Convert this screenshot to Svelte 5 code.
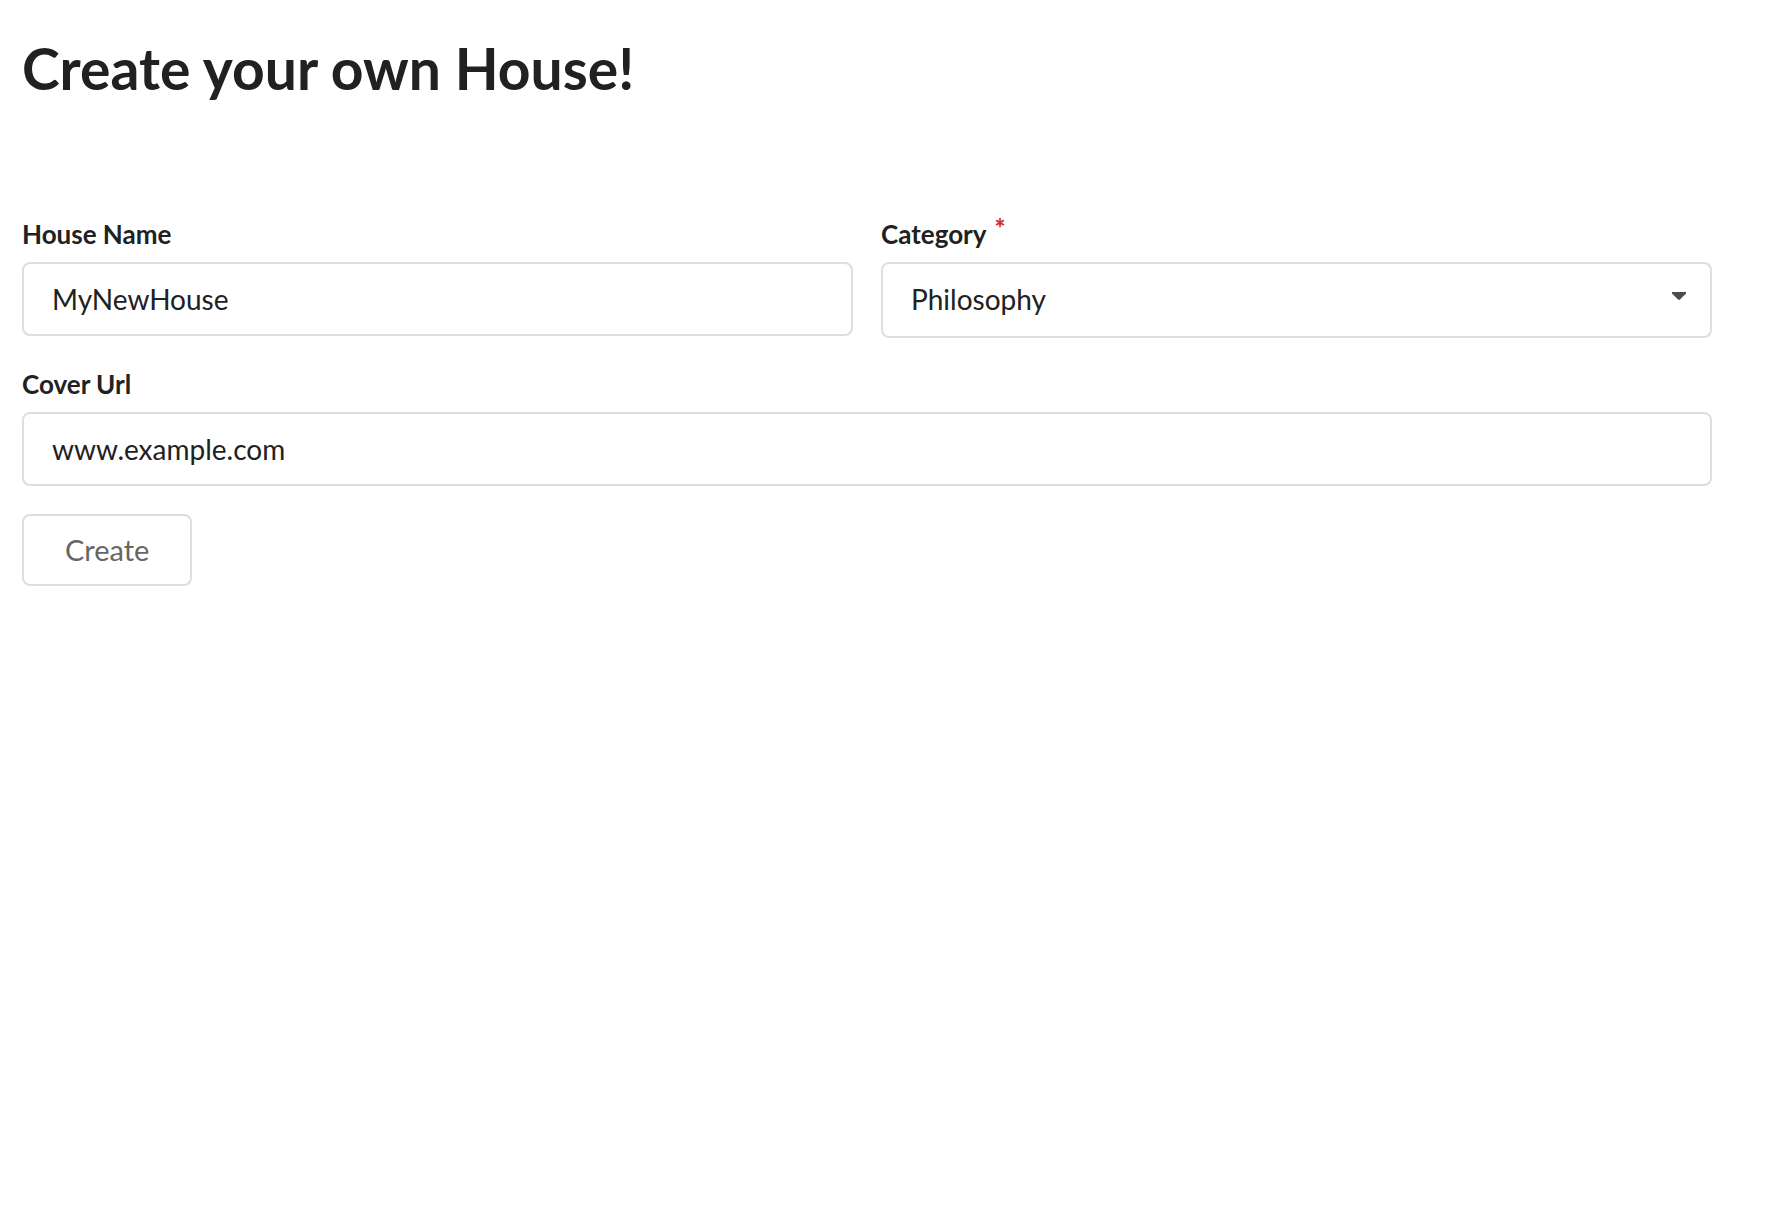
<script>
  let name = $state('MyNewHouse');
  let category = $state('Philosophy');
  let cover = $state('www.example.com');
</script>

<main>
  <h1>Create your own House!</h1>
  <form onsubmit={(e) => e.preventDefault()}>
    <div class="row">
      <div class="field">
        <label for="name">House Name</label>
        <input id="name" type="text" bind:value={name} />
      </div>
      <div class="field">
        <label for="category">Category<span class="required">*</span></label>
        <div class="dropdown">
          <select id="category" bind:value={category}>
            <option>Philosophy</option>
          </select>
          <svg class="caret" viewBox="0 0 14 8" aria-hidden="true">
            <path d="M0 0h14v1.500L8 7.500q-1 .9-2 0L0 1.500z" />
          </svg>
        </div>
      </div>
    </div>
    <div class="field">
      <label for="cover">Cover Url</label>
      <input id="cover" type="text" bind:value={cover} />
    </div>
    <button type="submit">Create</button>
  </form>
</main>

<style>
  :global(body) {
    background: #fff;
  }
  main {
    padding: 36px 78px 40px 22px;
    font-family: Lato, "Liberation Sans", sans-serif;
    color: #212121;
  }
  h1 {
    margin: 0 0 116px;
    font-size: 57px;
    line-height: 64px;
    font-weight: 700;
  }
  .row {
    display: grid;
    grid-template-columns: 1fr 1fr;
    gap: 28px;
    margin-bottom: 28px;
  }
  .field label {
    display: block;
    margin-bottom: 10px;
    font-size: 26px;
    line-height: 36px;
    font-weight: 700;
  }
  .required {
    display: inline-block;
    margin-left: 8px;
    color: #d0312d;
    font-weight: 900;
    line-height: 24px;
    vertical-align: top;
  }
  input,
  select {
    display: block;
    box-sizing: border-box;
    width: 100%;
    height: 74px;
    margin: 0;
    padding: 0 28px;
    border: 2px solid #dededf;
    border-radius: 8px;
    background: #fff;
    color: #212121;
    font-family: inherit;
    font-size: 28px;
    appearance: none;
  }
  .dropdown {
    position: relative;
  }
  select {
    height: 76px;
    padding-bottom: 2px;
  }
  .caret {
    position: absolute;
    top: 30px;
    right: 26px;
    width: 14px;
    height: 8px;
    fill: #4d4d4d;
    pointer-events: none;
  }
  button {
    margin: 28px 0 0;
    height: 72px;
    padding: 0 41px 2px;
    border: 2px solid #dededf;
    border-radius: 8px;
    background: #fff;
    color: #666;
    font-family: inherit;
    font-size: 29px;
  }
</style>
